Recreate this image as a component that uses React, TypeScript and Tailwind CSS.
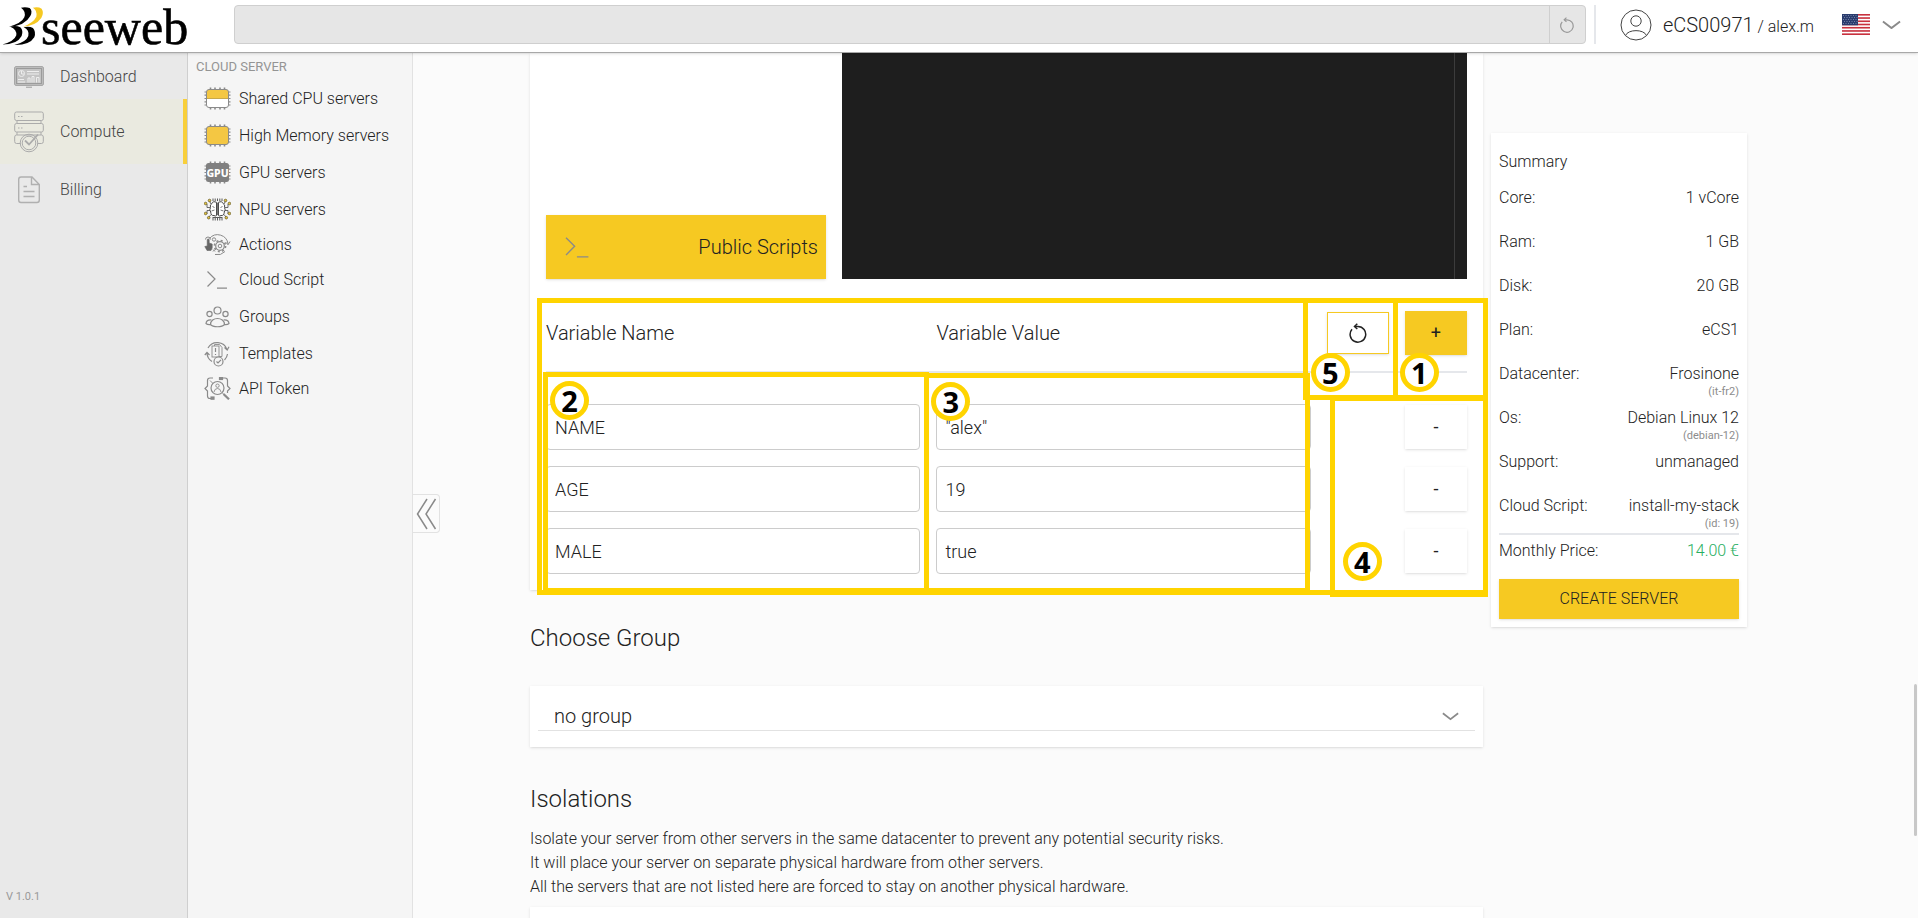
import { useState } from "react";
import type { ReactNode } from "react";

const GREY = "#8a8a8a";

function Logo() {
  return (
    <a href="#" aria-label="seeweb" className="flex w-[234px] shrink-0 items-center">
      <svg width="200" height="48" viewBox="0 0 200 48" aria-hidden="true" className="overflow-visible">
        <g transform="translate(1 1) scale(0.333)">
          <path d="M60 17Q74 14 86 18Q96 27 88 42Q72 72 24 74Q62 64 70 46Q76 28 60 17Z" />
          <path d="M96 17Q112 13 122 20Q130 32 121 48Q104 72 66 74Q98 62 106 44Q110 26 96 17Z" fill="#f6c922" />
          <path d="M28 74Q46 70 58 76Q68 86 62 102Q48 128 4 128Q40 118 46 100Q48 82 28 74Z" />
          <path d="M68 76Q84 72 96 78Q106 90 100 106Q86 130 40 129Q76 120 82 102Q86 84 68 76Z" />
        </g>
        <text x="41" y="43" fontFamily="Liberation Serif, serif" fontSize="50" stroke="#000" strokeWidth="0.6">
          seeweb
        </text>
      </svg>
    </a>
  );
}

function Reload({ size, color }: { size: number; color: string }) {
  return (
    <svg width={size} height={size} viewBox="0 0 20 20" fill="none" stroke={color} strokeWidth="1.5" aria-hidden="true">
      <path d="M4 6.2A7.800 7.800 0 1 0 10 3.500H7" />
      <path d="M9.300 0.800 6.500 3.500 9.300 6" />
    </svg>
  );
}

function Chevron({ width }: { width: number }) {
  return (
    <svg width={width} height={width / 2} viewBox="0 0 20 10" fill="none" stroke={GREY} strokeWidth="2" aria-hidden="true">
      <path d="M1 1.5 10 8.5 19 1.5" />
    </svg>
  );
}

function UserIcon() {
  return (
    <svg width="32" height="32" viewBox="0 0 32 32" fill="none" stroke="#444" aria-hidden="true">
      <circle cx="16" cy="16" r="15" />
      <circle cx="16" cy="12" r="5.2" />
      <path d="M5.500 26.500C8 20 24 20 26.500 26.500" />
    </svg>
  );
}

function Flag() {
  return (
    <svg width="28" height="21" viewBox="0 0 28 21" role="img" aria-label="English">
      <rect width="28" height="21" fill="#fff" />
      {[0, 2, 4, 6, 8, 10, 12].map((n) => (
        <rect key={n} y={n * 1.615} width="28" height="1.615" fill="#c8313e" />
      ))}
      <rect width="16" height="11.300" fill="#2a3c6e" />
      <g fill="#8d99bb">
        {[1.5, 3.5, 5.5, 7.5, 9.5].map((y, row) =>
          [1.5, 4, 6.5, 9, 11.5, 14].map((x) => (
            <circle key={x + "-" + y} cx={row % 2 ? x + 1 : x} cy={y} r="0.5" />
          ))
        )}
      </g>
    </svg>
  );
}

function DashboardIcon() {
  return (
    <svg width="30" height="22" viewBox="0 0 30 22" fill="none" stroke="#9b9b9b" aria-hidden="true">
      <rect x="0.700" y="0.700" width="28.600" height="18.600" rx="1" fill="#c4c4c4" />
      <rect x="2.500" y="2.500" width="25" height="15" />
      <path d="M12 21.200H18" />
      <g stroke="#eee">
        <circle cx="7.500" cy="7.500" r="3" />
        <path d="M7.500 5V8H10M13 5.500H25M13 8H25M4 13.500H10M4 16H11" />
        <path d="M14 16.500V12H16V16.500M18 16.500V10.500H20V16.500M22.500 16.500V11.500H25V16.500" />
      </g>
    </svg>
  );
}

function ComputeIcon() {
  return (
    <svg width="30" height="42" viewBox="0 0 30 42" fill="none" stroke="#ababab" aria-hidden="true">
      <rect x="0.700" y="1" width="28.600" height="8.500" rx="1.800" />
      <rect x="0.700" y="12.500" width="28.600" height="8.500" rx="1.800" />
      <path d="M3 9.500V12.500M27 9.500V12.500M3 21V24M27 21V24" />
      <path d="M6.500 32.500H2.500Q0.700 32.500 0.700 30.500V26Q0.700 24 2.500 24H27.500Q29.300 24 29.300 26V30.500Q29.300 32.500 27.500 32.500H23.500" />
      <path d="M4 5.500H5.500M7 5.500H8.500M4 17H5.500M7 17H8.500" />
      <circle cx="15" cy="32" r="8.800" />
      <circle cx="15" cy="32" r="6.800" />
      <path d="M11 29.500 15 33.500 24 23.500" strokeWidth="1.800" />
    </svg>
  );
}

function BillingIcon() {
  return (
    <svg width="30" height="28" viewBox="0 0 30 28" fill="none" stroke="#b0b0b0" strokeWidth="1.400" aria-hidden="true">
      <path d="M18 1H7Q4.700 1 4.700 3.500V24Q4.700 26.500 7 26.500H23Q25.300 26.500 25.300 24V8.500ZM17.500 1V8.500H25" />
      <path d="M9.500 10.500H13M9.500 15.500H20.500M9.500 20.500H20.500" />
    </svg>
  );
}

function Chip({ children }: { children: ReactNode }) {
  return (
    <svg width="27" height="23" viewBox="0 0 27 23" aria-hidden="true">
      <g fill="none" stroke={GREY} strokeWidth="1.600">
        <path d="M6.500 0.500V22.500M11 0.500V22.500M16 0.500V22.500M20.500 0.500V22.500" />
        <path d="M0.500 5H26.500M0.500 8.200H26.500M0.500 11.500H26.500M0.500 14.800H26.500M0.500 18H26.500" strokeWidth="1.200" />
      </g>
      {children}
    </svg>
  );
}

function SharedCpuIcon() {
  return (
    <Chip>
      <rect x="2.500" y="2.500" width="22" height="18" rx="2.500" fill="#fff" />
      <path d="M2.500 11.500V5Q2.500 2.500 5 2.500H22Q24.500 2.500 24.500 5V11.500Z" fill="#f4c743" />
      <path d="M3 11.500H24" stroke="#c9a94a" />
      <rect x="2.500" y="2.500" width="22" height="18" rx="2.500" fill="none" stroke={GREY} />
    </Chip>
  );
}

function HighMemoryIcon() {
  return (
    <Chip>
      <rect x="2.500" y="2.500" width="22" height="18" rx="2.500" fill="#f4c743" stroke={GREY} />
    </Chip>
  );
}

function GpuIcon() {
  return (
    <Chip>
      <rect x="2" y="2" width="23" height="19" rx="2.500" fill="#808080" />
      <text x="13.500" y="15.500" textAnchor="middle" fill="#fff" fontFamily="Noto Sans, sans-serif" fontSize="10.500" fontWeight="800">
        GPU
      </text>
    </Chip>
  );
}

function NpuIcon() {
  return (
    <svg width="27" height="23" viewBox="0 0 27 23" fill="none" stroke="#4a4a4a" aria-hidden="true">
      <path d="M9 0.500V3M11.200 0.500V3M13.500 0.500V3M15.800 0.500V3M18 0.500V3M9 20V22.500M11.200 20V22.500M13.500 20V22.500M15.800 20V22.500M18 20V22.500M8.500 19.500H18.500" strokeWidth="0.900" />
      <path d="M12.700 4.500Q9 2.500 8 5.500Q5.500 6.500 6.500 9.500Q5 12 6.700 14Q7 18 10 17.500Q12 19 12.700 17ZM14.300 4.500Q18 2.500 19 5.500Q21.500 6.500 20.500 9.500Q22 12 20.300 14Q20 18 17 17.500Q15 19 14.300 17Z" fill="#fff" />
      <path d="M12.700 5V17M14.300 5V17" strokeWidth="1.200" />
      <path d="M8.500 8.500 10.500 9.500M7.500 13 10.500 12M18.500 8.500 16.500 9.500M19.500 13 16.500 12" stroke="#777" />
      <path d="M6 9.500H3V6M6 12.500H3V16M7 6 5.500 3M7 16.500 5 19M21 9.500H24V6M21 12.500H24V16M20 6 21.500 3M20 16.500 22 19" strokeWidth="0.800" />
      <g fill="#e9c63a" stroke="#5a5226" strokeWidth="0.700">
        <circle cx="5.500" cy="2.500" r="1.300" />
        <circle cx="1.600" cy="5.500" r="1.300" />
        <circle cx="1.600" cy="15.500" r="1.300" />
        <circle cx="4.700" cy="19.700" r="1.300" />
        <circle cx="21.500" cy="2.500" r="1.300" />
        <circle cx="25.400" cy="5.500" r="1.300" />
        <circle cx="25.400" cy="15.500" r="1.300" />
        <circle cx="22.300" cy="19.700" r="1.300" />
      </g>
    </svg>
  );
}

function ActionsIcon() {
  return (
    <svg width="27" height="22" viewBox="0 0 27 22" fill="none" stroke={GREY} aria-hidden="true">
      <path d="M5.500 4.500A10.500 10.500 0 0 1 24 10M21.500 8 24 10.800 26 7.500M21 17.500A10.500 10.500 0 0 1 11 20.500" />
      <path d="M1.500 5.500A2.500 2.500 0 0 1 6.500 5.500" />
      <path d="M3.200 12V5.500Q4.200 4.300 5.200 5.500V9L8.200 10V14L7 16.500H3L0.800 12.500Z" fill="#666" stroke="#666" strokeWidth="0.600" />
      <circle cx="16" cy="12" r="4.300" strokeWidth="1.200" />
      <circle cx="16" cy="12" r="5.600" strokeWidth="1.600" strokeDasharray="2 2.400" />
      <circle cx="16" cy="12" r="1.800" />
      <circle cx="10" cy="5.500" r="1.700" />
      <path d="M9 15.500 11 17.500M9 17.500 11 15.500" />
    </svg>
  );
}

function ScriptIcon({ width = 27 }: { width?: number }) {
  return (
    <svg width={width} height={width * 0.74} viewBox="0 0 27 20" fill="none" stroke={GREY} strokeWidth="1.200" aria-hidden="true">
      <path d="M3.500 1.500 11 9 3.500 16.500M13 18.200H23" />
    </svg>
  );
}

function GroupsIcon() {
  return (
    <svg width="27" height="22" viewBox="0 0 27 22" fill="none" stroke={GREY} strokeWidth="1.200" aria-hidden="true">
      <circle cx="13.500" cy="4.500" r="3.500" />
      <circle cx="5.500" cy="8" r="2.600" />
      <circle cx="21.500" cy="8" r="2.600" />
      <path d="M6.500 18.500C6.500 10.500 20.500 10.500 20.500 18.500C18 21.500 9 21.500 6.500 18.500Z" />
      <path d="M7.500 14Q2.500 13.500 2 17.500Q3.500 19 6.500 18.600M19.500 14Q24.500 13.500 25 17.500Q23.500 19 20.500 18.600" />
    </svg>
  );
}

function TemplatesIcon() {
  return (
    <svg width="27" height="26" viewBox="0 0 27 26" fill="none" stroke={GREY} strokeWidth="1.200" aria-hidden="true">
      <path d="M4 7A10.500 10.500 0 0 1 23 8.500M20.500 6.500 23.200 9 25 5.800" />
      <path d="M3 12A10.500 10.500 0 0 0 8 20.500M0.800 14 3 11.500 5.500 14M23.500 13A10.500 10.500 0 0 1 20.500 19" />
      <rect x="8" y="5" width="7" height="11" strokeWidth="0.900" />
      <path d="M10.500 5V3.500H15.500L18 6.500V15.500H15" strokeWidth="0.900" />
      <path d="M11.500 7V11M11.500 13V14" />
      <circle cx="14.500" cy="20.500" r="4.500" fill="#f5f5f5" />
      <path d="M12.500 20.500 14 22 17 18.800" />
    </svg>
  );
}

function TokenIcon() {
  return (
    <svg width="27" height="23" viewBox="0 0 27 23" fill="none" stroke={GREY} strokeWidth="1.200" aria-hidden="true">
      <path d="M9 1H6Q3.500 1 3.500 3.500V9L1 11.500 3.500 14V19Q3.500 21.500 6 21.500H9" />
      <path d="M16 1H21Q23.500 1 23.500 3.500V9L26 11.500 23.500 14V16" />
      <circle cx="13.500" cy="11" r="6.500" />
      <circle cx="13.500" cy="8.700" r="1.700" strokeWidth="0.900" />
      <path d="M10 15Q10.500 11.500 13.500 11.500Q16.500 11.500 17 15M9 6.500 6 3.500M18.200 15.700 20 17.500" strokeWidth="0.900" />
      <path d="M19.500 17 25 22.300" strokeWidth="2.200" />
      <rect x="15.500" y="0.300" width="3" height="2.200" fill={GREY} />
      <rect x="7" y="20" width="3" height="2.200" fill={GREY} />
    </svg>
  );
}

const servers = [
  { label: "Shared CPU servers", icon: <SharedCpuIcon />, row: "h-[37px]" },
  { label: "High Memory servers", icon: <HighMemoryIcon />, row: "h-[37px]" },
  { label: "GPU servers", icon: <GpuIcon />, row: "h-[37px]" },
  { label: "NPU servers", icon: <NpuIcon />, row: "h-[37px]" },
  { label: "Actions", icon: <ActionsIcon />, row: "h-[33px]" },
  { label: "Cloud Script", icon: <ScriptIcon />, row: "h-[37px]" },
  { label: "Groups", icon: <GroupsIcon />, row: "h-[37px]" },
  { label: "Templates", icon: <TemplatesIcon />, row: "h-[37px]" },
  { label: "API Token", icon: <TokenIcon />, row: "h-[33px]" },
];

const summary = [
  { label: "Core:", value: "1 vCore" },
  { label: "Ram:", value: "1 GB" },
  { label: "Disk:", value: "20 GB" },
  { label: "Plan:", value: "eCS1" },
  { label: "Datacenter:", value: "Frosinone", note: "(it-fr2)" },
  { label: "Os:", value: "Debian Linux 12", note: "(debian-12)" },
  { label: "Support:", value: "unmanaged" },
  { label: "Cloud Script:", value: "install-my-stack", note: "(id: 19)" },
];

const defaults = [
  { name: "NAME", value: '"alex"' },
  { name: "AGE", value: "19" },
  { name: "MALE", value: "true" },
];

function Header() {
  return (
    <header className="relative z-10 flex h-[53px] shrink-0 items-center border-b border-[#a8a8a8] bg-white pb-[3px] shadow">
      <Logo />
      <div className="flex h-[39px] flex-1 overflow-hidden rounded border border-[#cfcfcf] bg-[#e6e6e6]">
        <input aria-label="Search" className="min-w-0 flex-1 bg-transparent px-3 outline-none" />
        <button aria-label="Refresh" className="flex w-9 items-center justify-center border-l border-[#cfcfcf]">
          <Reload size={16} color="#999" />
        </button>
      </div>
      <div className="ml-2 h-[39px] w-0.5 bg-[#e5e7eb]" />
      <div className="ml-6 flex items-center">
        <UserIcon />
        <p className="ml-[11px] text-base">
          <span className="text-xl">eCS00971</span> / alex.m
        </p>
      </div>
      <button aria-label="Language" className="mr-[17px] ml-7 flex items-center gap-3">
        <Flag />
        <Chevron width={19} />
      </button>
    </header>
  );
}

function Sidebar() {
  return (
    <nav className="flex w-[188px] shrink-0 flex-col border-r border-[#cfcfcf] bg-[#e9e9e9] text-[#444]">
      <a href="#" className="flex h-[46px] items-center gap-4 pt-0.5 pl-3.5">
        <DashboardIcon /> Dashboard
      </a>
      <a href="#" className="flex h-[65px] items-center gap-4 border-r-4 border-[#f8cf3a] bg-[#eaeae0] pl-3.5">
        <ComputeIcon /> Compute
      </a>
      <a href="#" className="flex h-[51px] items-center gap-4 pl-3.5">
        <BillingIcon /> Billing
      </a>
      <p className="mt-auto px-1.5 pb-3 text-[11px] leading-[18px] font-normal text-[#999]">V 1.0.1</p>
    </nav>
  );
}

function ServerMenu() {
  return (
    <nav className="w-[225px] shrink-0 border-r border-[#e2e2e2] bg-[#f5f5f5]">
      <h2 className="h-[27px] pt-1 pl-2 text-[13px] leading-5 font-normal text-[#949494]">CLOUD SERVER</h2>
      {servers.map((s) => (
        <a key={s.label} href="#" className={`flex items-center gap-2 pl-4 ${s.row}`}>
          {s.icon}
          {s.label}
        </a>
      ))}
    </nav>
  );
}

function Mark({ n, className }: { n: number; className: string }) {
  return (
    <span
      className={`absolute flex size-[39px] items-center justify-center rounded-full border-[5px] border-[#ffd400] bg-white font-['Open_Sans',sans-serif] text-[29px] leading-none font-bold text-black ${className}`}
    >
      {n}
    </span>
  );
}

// numbered guide boxes, on the same 12 columns as the form under them
function Guide() {
  const box = "absolute border-[5px] border-[#ffd400]";
  return (
    <div className="pointer-events-none absolute inset-0 z-10 grid grid-cols-12 gap-4">
      <div className={`${box} top-[3px] -right-[21px] -bottom-[5px] -left-[9px]`} />
      <div className="relative col-span-5">
        <div className={`${box} top-[77px] -right-[9px] -bottom-[3px] -left-[3px]`} />
        <Mark n={2} className="top-[86px] left-1" />
      </div>
      <div className="relative col-span-5">
        <div className={`${box} top-[78px] right-px -bottom-[3px] -left-3`} />
        <Mark n={3} className="top-[87px] -left-[5px]" />
      </div>
      <div className="relative">
        <div className={`${box} top-[3px] -right-[9px] -left-6 h-[102px]`} />
        <Mark n={5} className="top-[58px] -left-4" />
      </div>
      <div className="relative">
        <div className={`${box} top-[3px] -right-[21px] -left-3 h-[102px]`} />
        <div className={`${box} top-[101px] -right-[21px] -bottom-[7px] -left-[75px]`} />
        <Mark n={1} className="top-[58px] -left-[5px]" />
        <Mark n={4} className="top-[247px] -left-[62px]" />
      </div>
    </div>
  );
}

function Variables() {
  const [rows, setRows] = useState(defaults);

  function update(index: number, key: "name" | "value", text: string) {
    setRows(rows.map((r, i) => (i === index ? { ...r, [key]: text } : r)));
  }

  const field = "col-span-5 h-[46px] min-w-0 rounded border border-[#ccc] bg-white px-2 text-lg outline-none";

  return (
    <section className="relative mt-4 py-4">
      <div className="grid grid-cols-12 items-center gap-4 border-b-2 border-[#e5e7eb] pb-4">
        <h3 id="var-name" className="col-span-5 text-xl">Variable Name</h3>
        <h3 id="var-value" className="col-span-5 text-xl">Variable Value</h3>
        <button
          aria-label="Reset variables"
          onClick={() => setRows(defaults)}
          className="flex h-[42px] items-center justify-center border border-[#f6c922] bg-white shadow-sm"
        >
          <Reload size={20} color="#222" />
        </button>
        <button
          onClick={() => setRows([...rows, { name: "", value: "" }])}
          className="h-11 bg-[#f6c922] text-lg font-normal shadow"
        >
          +
        </button>
      </div>
      <div className="mt-[31px] flex flex-col gap-4">
        {rows.map((r, i) => (
          <div key={i} className="grid grid-cols-12 items-center gap-4">
            <input aria-labelledby="var-name" className={field} value={r.name} onChange={(e) => update(i, "name", e.target.value)} />
            <input aria-labelledby="var-value" className={field} value={r.value} onChange={(e) => update(i, "value", e.target.value)} />
            <button
              aria-label="Remove variable"
              onClick={() => setRows(rows.filter((_, n) => n !== i))}
              className="col-start-12 h-11 bg-white text-lg font-normal shadow"
            >
              -
            </button>
          </div>
        ))}
      </div>
      <Guide />
    </section>
  );
}

function Summary() {
  return (
    <aside className="mt-20 w-64 shrink-0 self-start bg-white p-2 shadow">
      <h2 className="pt-[9px] pb-1 leading-6">Summary</h2>
      <dl className="pt-2">
        {summary.map((s) => (
          <div key={s.label} className="flex h-11 justify-between leading-6 nth-8:h-[39px]">
            <dt>{s.label}</dt>
            <dd className="text-right">
              {s.value}
              {s.note && <small className="block text-[11px] leading-3 font-normal text-[#8c8c8c]">{s.note}</small>}
            </dd>
          </div>
        ))}
        <div className="flex justify-between border-t-2 border-[#e5e7eb] pt-1 leading-6">
          <dt>Monthly Price:</dt>
          <dd className="text-[#27ae60]">14.00 €</dd>
        </div>
      </dl>
      <button className="mt-4 h-10 w-full bg-[#f6c922] shadow">CREATE SERVER</button>
    </aside>
  );
}

export default function App() {
  return (
    <div className="flex h-screen flex-col overflow-hidden bg-[#fbfbfb] font-['Roboto',sans-serif] text-base font-light text-[#222]">
      <Header />
      <div className="flex min-h-0 flex-1">
        <Sidebar />
        <ServerMenu />

        <main className="relative flex min-w-0 flex-1 gap-2 overflow-hidden pr-[171px] pl-[117px]">
          <button
            aria-label="Collapse menu"
            className="absolute top-[441px] left-0 flex h-[39px] w-[27px] items-center justify-center rounded-r border border-l-0 border-[#e2e2e2] bg-[#fbfbfb]"
          >
            <svg width="21" height="32" viewBox="0 0 21 32" fill="none" stroke={GREY} strokeWidth="1.500" aria-hidden="true">
              <path d="M11 1 1.500 16 11 31M19.500 1 10 16 19.500 31" />
            </svg>
          </button>

          <div className="min-w-0 flex-1">
            <div className="bg-white px-4 shadow">
              <div className="flex h-[226px] items-end gap-4">
                <button className="flex h-16 w-[280px] items-center justify-between bg-[#f6c922] pr-2 pl-4 text-xl shadow">
                  <ScriptIcon width={31} />
                  Public Scripts
                </button>
                <div className="flex h-full flex-1 bg-[#1e1e1e] pr-3">
                  <textarea
                    aria-label="Script"
                    className="h-full flex-1 resize-none border-r border-[#3c3c3c] p-2 font-['Liberation_Mono',monospace] text-sm text-gray-200 outline-none"
                  />
                </div>
              </div>
              <Variables />
            </div>

            <h2 id="group" className="mt-8 text-2xl">Choose Group</h2>
            <div className="mt-8 bg-white px-2 pt-4 pb-4 shadow">
              <div className="relative border-b border-[#e2e2e2]">
                <select aria-labelledby="group" className="h-7 w-full appearance-none bg-transparent px-4 text-xl outline-none">
                  <option>no group</option>
                </select>
                <span className="pointer-events-none absolute top-2.5 right-4">
                  <Chevron width={17} />
                </span>
              </div>
            </div>

            <h2 className="mt-9 text-2xl">Isolations</h2>
            <p className="mt-3 leading-6">
              Isolate your server from other servers in the same datacenter to prevent any potential security risks.
              <br />
              It will place your server on separate physical hardware from other servers.
              <br />
              All the servers that are not listed here are forced to stay on another physical hardware.
            </p>
            <div className="mt-2 h-16 bg-white shadow" />
          </div>

          <Summary />
          <div className="absolute right-px bottom-[82px] h-[152px] w-[3px] rounded-full bg-[#c8c8c8]" />
        </main>
      </div>
    </div>
  );
}
